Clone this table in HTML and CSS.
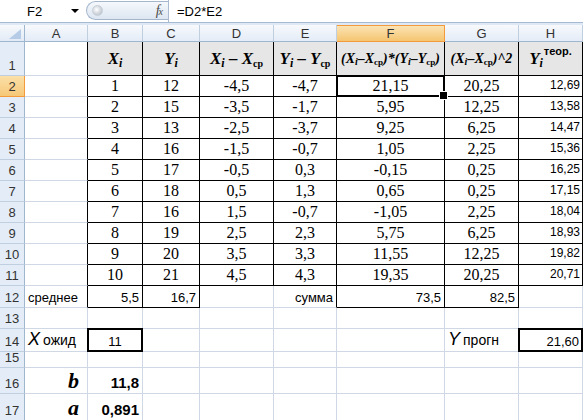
FILE: index.html
```html
<!DOCTYPE html>
<html lang="ru">
<head>
<meta charset="utf-8">
<title>Excel</title>
<link rel="stylesheet" href="styles.css">
</head>
<body>
<div class="fbar">
  <div class="namebox"><span class="nb-text">F2</span><span class="nb-arrow"></span></div>
  <div class="fxbtn"><span class="knob"></span><span class="fx">f<span class="fxx">x</span></span></div>
  <div class="formula">=D2*E2</div>
</div>
<div class="strip"></div>
<div class="sheet">
  <!-- column headers -->
  <div class="corner"><svg width="14" height="12" viewBox="0 0 14 12"><polygon points="13,1 13,11 1,11" fill="#b5cbe6"/></svg></div>
  <div class="ch">A</div><div class="ch">B</div><div class="ch">C</div><div class="ch">D</div><div class="ch">E</div><div class="ch chs">F</div><div class="ch">G</div><div class="ch">H</div>

  <!-- row 1 -->
  <div class="rh">1</div>
  <div class="c bl"></div>
  <div class="c t hd"><span class="m">X<sub>i</sub></span></div>
  <div class="c t hd"><span class="m">Y<sub>i</sub></span></div>
  <div class="c t hd"><span class="m">X<sub>i</sub> – X<sub class="cp">ср</sub></span></div>
  <div class="c t hd"><span class="m">Y<sub>i</sub> – Y<sub class="cp">ср</sub></span></div>
  <div class="c t hd"><span class="m sm">(X<sub>i</sub>–X<sub class="cp">ср</sub>)*(Y<sub>i</sub>–Y<sub class="cp">ср</sub>)</span></div>
  <div class="c t hd"><span class="m sm">(X<sub>i</sub>–X<sub class="cp">ср</sub>)^2</span></div>
  <div class="c t hd"><span class="m">Y<sub>i</sub><sup class="teor">теор.</sup></span></div>

  <!-- row 2 -->
  <div class="rh rhs">2</div>
  <div class="c bl"></div>
  <div class="c t n">1</div><div class="c t n">12</div><div class="c t n">-4,5</div><div class="c t n">-4,7</div>
  <div class="c t n sel">21,15</div><div class="c t n">20,25</div><div class="c t hv">12,69</div>

  <div class="rh">3</div>
  <div class="c bl"></div>
  <div class="c t n">2</div><div class="c t n">15</div><div class="c t n">-3,5</div><div class="c t n">-1,7</div>
  <div class="c t n">5,95</div><div class="c t n">12,25</div><div class="c t hv">13,58</div>

  <div class="rh">4</div>
  <div class="c bl"></div>
  <div class="c t n">3</div><div class="c t n">13</div><div class="c t n">-2,5</div><div class="c t n">-3,7</div>
  <div class="c t n">9,25</div><div class="c t n">6,25</div><div class="c t hv">14,47</div>

  <div class="rh">5</div>
  <div class="c bl"></div>
  <div class="c t n">4</div><div class="c t n">16</div><div class="c t n">-1,5</div><div class="c t n">-0,7</div>
  <div class="c t n">1,05</div><div class="c t n">2,25</div><div class="c t hv">15,36</div>

  <div class="rh">6</div>
  <div class="c bl"></div>
  <div class="c t n">5</div><div class="c t n">17</div><div class="c t n">-0,5</div><div class="c t n">0,3</div>
  <div class="c t n">-0,15</div><div class="c t n">0,25</div><div class="c t hv">16,25</div>

  <div class="rh">7</div>
  <div class="c bl"></div>
  <div class="c t n">6</div><div class="c t n">18</div><div class="c t n">0,5</div><div class="c t n">1,3</div>
  <div class="c t n">0,65</div><div class="c t n">0,25</div><div class="c t hv">17,15</div>

  <div class="rh">8</div>
  <div class="c bl"></div>
  <div class="c t n">7</div><div class="c t n">16</div><div class="c t n">1,5</div><div class="c t n">-0,7</div>
  <div class="c t n">-1,05</div><div class="c t n">2,25</div><div class="c t hv">18,04</div>

  <div class="rh">9</div>
  <div class="c bl"></div>
  <div class="c t n">8</div><div class="c t n">19</div><div class="c t n">2,5</div><div class="c t n">2,3</div>
  <div class="c t n">5,75</div><div class="c t n">6,25</div><div class="c t hv">18,93</div>

  <div class="rh">10</div>
  <div class="c bl"></div>
  <div class="c t n">9</div><div class="c t n">20</div><div class="c t n">3,5</div><div class="c t n">3,3</div>
  <div class="c t n">11,55</div><div class="c t n">12,25</div><div class="c t hv">19,82</div>

  <div class="rh">11</div>
  <div class="c bl"></div>
  <div class="c t n">10</div><div class="c t n">21</div><div class="c t n">4,5</div><div class="c t n">4,3</div>
  <div class="c t n">19,35</div><div class="c t n">20,25</div><div class="c t hv">20,71</div>

  <!-- row 12 -->
  <div class="rh">12</div>
  <div class="c bl">среднее</div>
  <div class="c t r">5,5</div><div class="c t r">16,7</div>
  <div class="c"></div>
  <div class="c bl r">сумма</div>
  <div class="c t r">73,5</div><div class="c t r">82,5</div>
  <div class="c"></div>

  <!-- row 13 -->
  <div class="rh">13</div>
  <div class="c"></div><div class="c"></div><div class="c"></div><div class="c"></div><div class="c"></div><div class="c"></div><div class="c"></div><div class="c"></div>

  <!-- row 14 -->
  <div class="rh">14</div>
  <div class="c lab"><span class="big">X</span>ожид</div>
  <div class="c thick ctr">11</div>
  <div class="c"></div><div class="c"></div><div class="c"></div><div class="c"></div>
  <div class="c lab"><span class="big">Y</span>прогн</div>
  <div class="c thick r v13">21,60</div>

  <!-- row 15 -->
  <div class="rh">15</div>
  <div class="c"></div><div class="c"></div><div class="c"></div><div class="c"></div><div class="c"></div><div class="c"></div><div class="c"></div><div class="c"></div>

  <!-- row 16 -->
  <div class="rh">16</div>
  <div class="c r coef">b</div>
  <div class="c r bv">11,8</div>
  <div class="c"></div><div class="c"></div><div class="c"></div><div class="c"></div><div class="c"></div><div class="c"></div>

  <!-- row 17 -->
  <div class="rh">17</div>
  <div class="c r coef">a</div>
  <div class="c r bv">0,891</div>
  <div class="c"></div><div class="c"></div><div class="c"></div><div class="c"></div><div class="c"></div><div class="c"></div>
</div>
</body>
</html>
```

FILE: styles.css
```css
* { box-sizing: border-box; }
html, body { margin: 0; padding: 0; }
body {
  width: 583px;
  height: 420px;
  overflow: hidden;
  background: #fff;
  font-family: "Liberation Sans", Arial, sans-serif;
  color: #000;
}

/* formula bar */
.fbar {
  display: flex;
  height: 23px;
  border-bottom: 1px solid #a7bad3;
  background: #fff;
}
.namebox {
  width: 86px;
  display: flex;
  align-items: center;
}
.nb-text { padding-left: 27px; font-size: 13px; }
.nb-arrow {
  margin-left: auto;
  margin-right: 7px;
  width: 0; height: 0;
  border-left: 4px solid transparent;
  border-right: 4px solid transparent;
  border-top: 4px solid #000;
}
.fxbtn {
  width: 82px;
  height: 19px;
  margin-top: 1px;
  border: 1px solid #a3b6cc;
  border-right: none;
  border-radius: 10px 0 0 10px;
  background: linear-gradient(#f5f8fc, #dde6f1);
  display: flex;
  align-items: center;
  padding: 0 6px 0 5px;
}
.knob {
  width: 11px; height: 11px;
  border-radius: 50%;
  background: radial-gradient(circle at 40% 40%, #ffffff, #aab4c0);
  border: 1px solid #c6ced8;
}
.fx {
  margin-left: auto;
  font: italic 14px "Liberation Serif", serif;
  color: #4a4a4a;
  letter-spacing: -1px;
}
.fxx { font-size: 10px; }
.formula {
  flex: 1;
  border-left: 1px solid #aabbd0;
  padding-left: 8px;
  font-size: 13px;
  display: flex;
  align-items: center;
}
.strip { height: 2px; background: #dfe8f5; }

/* grid */
.sheet {
  display: grid;
  grid-template-columns: 25px 63px 55px 57px 74px 63px 108px 74px 64px;
  grid-template-rows: 17px 34px repeat(10, 21px) 22px 21px 23px 16px 26px 27px;
}
.corner {
  background: linear-gradient(#f6f9fc, #e3ebf6);
  border-right: 1px solid #9eb6ce;
  border-bottom: 1px solid #9eb6ce;
  display: flex;
  align-items: flex-end;
  justify-content: flex-end;
  padding: 0 2px 1px 0;
}
.ch {
  background: linear-gradient(#f7f9fc, #e4ecf7);
  border-right: 1px solid #c0cfe0;
  border-bottom: 1px solid #9eb6ce;
  display: flex;
  align-items: center;
  justify-content: center;
  font-size: 13px;
  color: #333;
}
.chs {
  background: linear-gradient(#fbe3b4, #f5c570);
  border: 1px solid #f29a3c;
  border-left: none;
}
.rh {
  background: #e4ecf7;
  border-right: 1px solid #9eb6ce;
  border-bottom: 1px solid #c0cfe0;
  display: flex;
  align-items: flex-end;
  justify-content: center;
  font-size: 13px;
  color: #333;
  padding-bottom: 2px;
}
.rhs {
  background: linear-gradient(#fbe0a9, #f6c878);
  border-right-color: #f29a3c;
  border-bottom-color: #f29a3c;
}

.c {
  border-right: 1px solid #d0d7e5;
  border-bottom: 1px solid #d0d7e5;
  display: flex;
  align-items: flex-end;
  justify-content: flex-start;
  white-space: nowrap;
  overflow: hidden;
  min-width: 0;
  font-size: 13px;
  line-height: 15px;
  padding: 0 3px 2px;
}
.t { border-right-color: #000; border-bottom-color: #000; }
.bl { border-right-color: #000; }
.r { justify-content: flex-end; }
.ctr { justify-content: center; }

.hd {
  background: #e6e6e6;
  align-items: center;
  justify-content: center;
  padding: 0;
}
.m {
  font: bold italic 17px "Liberation Serif", serif;
  line-height: 20px;
}
.m sub {
  font-size: 12px;
  vertical-align: -3px;
  line-height: 0;
}
.m .cp { font-style: normal; font-size: 10px; }
.m.sm { font-size: 14px; }
.m.sm sub { font-size: 10px; vertical-align: -2px; }
.m.sm .cp { font-size: 9px; }
.teor {
  font: bold 11px "Liberation Sans", Arial, sans-serif;
  vertical-align: 9px;
  line-height: 0;
  margin-left: 1px;
}

.n {
  font: 16px "Liberation Serif", serif;
  line-height: 18px;
  justify-content: center;
  padding: 0 2px 1px;
}
.hv { justify-content: flex-end; font-size: 12px; padding-right: 2px; padding-bottom: 3px; }
.v13 { font-size: 13px; }

.sel, .thick { position: relative; overflow: visible; }
.sel::after, .thick::after {
  content: "";
  position: absolute;
  top: -1px; left: -1px; right: -1px; bottom: -1px;
  border: 2px solid #000;
}
.sel::before {
  content: "";
  position: absolute;
  right: -4px; bottom: -4px;
  width: 7px; height: 7px;
  background: #000;
  border: 1px solid #fff;
  z-index: 2;
}

.lab { font-size: 14px; padding-bottom: 3px; }
.big { font-style: italic; font-size: 18px; line-height: 18px; margin-right: 3px; }

.coef {
  font: bold italic 22px "Liberation Serif", serif;
  line-height: 22px;
  padding-right: 8px;
  padding-bottom: 1px;
}
.bv { font-weight: bold; font-size: 15px; line-height: 17px; padding-right: 3px; padding-bottom: 2px; }
```
